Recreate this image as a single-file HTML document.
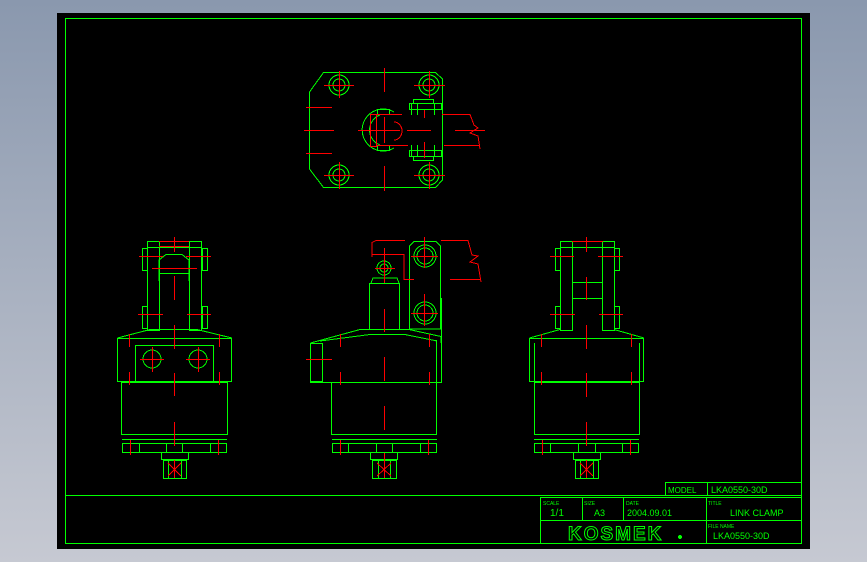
<!DOCTYPE html>
<html><head><style>
html,body{margin:0;padding:0;width:867px;height:562px;overflow:hidden;background:linear-gradient(#8a98ae,#c6c9d2);}
svg{position:absolute;left:0;top:0}
text{font-family:"Liberation Sans",sans-serif;fill:#00ff00}
</style></head><body>
<svg width="867" height="562" viewBox="0 0 867 562" shape-rendering="crispEdges">
<rect x="57" y="13" width="753" height="536" fill="#000"/>
<g fill="none" stroke="#00ff00" stroke-width="1">
<rect x="65.5" y="18.5" width="736" height="525"/>
<line x1="65" y1="495.5" x2="801" y2="495.5"/>
<polyline points="665.5,496 665.5,482.5 801,482.5"/>
<line x1="707.5" y1="482" x2="707.5" y2="496"/>
<rect x="540.5" y="497.5" width="261" height="46"/>
<line x1="540" y1="520.5" x2="801" y2="520.5"/>
<line x1="582.5" y1="497" x2="582.5" y2="520"/>
<line x1="623.5" y1="497" x2="623.5" y2="520"/>
<line x1="706.5" y1="497" x2="706.5" y2="543"/>

<polygon points="323.5,72.5 435.5,72.5 442.5,79 442.5,180 435.5,187.5 323.5,187.5 309.5,169 309.5,92"/>
<circle cx="339" cy="85" r="10"/><circle cx="339" cy="85" r="6"/>
<circle cx="429" cy="85" r="10"/><circle cx="429" cy="85" r="6"/>
<circle cx="339" cy="175" r="10"/><circle cx="339" cy="175" r="6"/>
<circle cx="429" cy="175" r="10"/><circle cx="429" cy="175" r="6"/>
<path d="M394 112 A21 21 0 1 0 394 148"/>
<path d="M380 115 A16 16 0 0 0 380 145"/>
<rect x="377.5" y="109.5" width="12" height="5"/><rect x="377.5" y="145.5" width="12" height="5"/>
<rect x="409.5" y="103.5" width="32" height="6"/><rect x="413.5" y="99.5" width="20" height="4"/>
<rect x="409.5" y="150.5" width="32" height="6"/><rect x="413.5" y="156.5" width="20" height="4"/>
<line x1="411.5" y1="103" x2="411.5" y2="115"/><line x1="417.5" y1="103" x2="417.5" y2="115"/><line x1="434.5" y1="103" x2="434.5" y2="115"/>
<line x1="411.5" y1="145" x2="411.5" y2="157"/><line x1="417.5" y1="145" x2="417.5" y2="157"/><line x1="434.5" y1="145" x2="434.5" y2="157"/>

<path d="M409.5 329 V246 L414 241.5 H436 L440.5 246 V329 Z"/>
<line x1="441.5" y1="298" x2="441.5" y2="382"/>
<circle cx="425" cy="256" r="11"/><circle cx="425" cy="256" r="8"/>
<circle cx="425" cy="313" r="11"/><circle cx="425" cy="313" r="8"/>
<circle cx="384" cy="268" r="7"/><circle cx="384" cy="268" r="4"/>
<rect x="369.5" y="283.5" width="30" height="46"/>
<path d="M371 283 L373 278 H397 L399 283"/>
<path d="M310.5 343 L360 329.5 H409 L441 336.5 V343"/>
<path d="M320 341 L370 334.5 H405 L437 341"/>
<rect x="310.5" y="343.5" width="12" height="38"/>
<line x1="310" y1="382.5" x2="442" y2="382.5"/>
<line x1="436.5" y1="340" x2="436.5" y2="434"/>
<line x1="331.5" y1="382" x2="331.5" y2="434"/>
<line x1="331" y1="434.5" x2="437" y2="434.5"/>
<rect x="332.5" y="443.5" width="104" height="9"/><line x1="332" y1="439.5" x2="437" y2="439.5"/>
<line x1="348.5" y1="443" x2="348.5" y2="452"/><line x1="376.5" y1="443" x2="376.5" y2="452"/><line x1="392.5" y1="443" x2="392.5" y2="452"/><line x1="420.5" y1="443" x2="420.5" y2="452"/>
<rect x="370.5" y="452.5" width="27" height="7"/>
<rect x="372.5" y="460.5" width="24" height="18"/><line x1="378.5" y1="460" x2="378.5" y2="478"/><line x1="390.5" y1="460" x2="390.5" y2="478"/>

<rect x="147.5" y="241.5" width="12" height="89"/><rect x="189.5" y="241.5" width="12" height="89"/>
<line x1="147" y1="247.5" x2="202" y2="247.5"/>
<path d="M159 281 V260 L166 254.5 H182 L189 260 V281"/>
<line x1="159" y1="273.5" x2="189" y2="273.5"/>
<rect x="142.5" y="248.5" width="5" height="22"/><rect x="202.5" y="248.5" width="5" height="22"/>
<rect x="142.5" y="306.5" width="5" height="22"/><rect x="202.5" y="306.5" width="5" height="22"/>
<path d="M117.5 338 L150 329.5 H197 L232 338"/>
<rect x="117.5" y="338.5" width="114" height="43"/>
<line x1="135.5" y1="345" x2="135.5" y2="382"/><line x1="213.5" y1="345" x2="213.5" y2="382"/>
<line x1="135" y1="345.5" x2="213" y2="345.5"/>
<circle cx="152" cy="359" r="9"/><circle cx="198" cy="359" r="9"/>
<rect x="121.5" y="382.5" width="106" height="52"/>
<rect x="122.5" y="443.5" width="104" height="9"/><line x1="122" y1="439.5" x2="227" y2="439.5"/>
<line x1="139.5" y1="443" x2="139.5" y2="452"/><line x1="166.5" y1="443" x2="166.5" y2="452"/><line x1="182.5" y1="443" x2="182.5" y2="452"/><line x1="210.5" y1="443" x2="210.5" y2="452"/>
<rect x="161.5" y="452.5" width="27" height="7"/>
<rect x="163.5" y="460.5" width="23" height="18"/><line x1="168.5" y1="460" x2="168.5" y2="478"/><line x1="181.5" y1="460" x2="181.5" y2="478"/>

<rect x="560.5" y="241.5" width="12" height="89"/><rect x="602.5" y="241.5" width="12" height="89"/>
<line x1="560" y1="247.5" x2="615" y2="247.5"/>
<line x1="572" y1="282.5" x2="603" y2="282.5"/><line x1="572" y1="298.5" x2="603" y2="298.5"/>
<rect x="555.5" y="248.5" width="5" height="22"/><rect x="614.5" y="248.5" width="5" height="22"/>
<rect x="555.5" y="306.5" width="5" height="22"/><rect x="614.5" y="306.5" width="5" height="22"/>
<path d="M529.5 338 L560 329.5 M614 329.5 L644 338"/>
<rect x="529.5" y="338.5" width="114" height="43"/>
<line x1="534.5" y1="343" x2="534.5" y2="382"/><line x1="639.5" y1="343" x2="639.5" y2="382"/>
<rect x="534.5" y="382.5" width="105" height="52"/>
<rect x="534.5" y="443.5" width="104" height="9"/><line x1="534" y1="439.5" x2="639" y2="439.5"/>
<line x1="550.5" y1="443" x2="550.5" y2="452"/><line x1="578.5" y1="443" x2="578.5" y2="452"/><line x1="595.5" y1="443" x2="595.5" y2="452"/><line x1="622.5" y1="443" x2="622.5" y2="452"/>
<rect x="573.5" y="452.5" width="27" height="7"/>
<rect x="575.5" y="460.5" width="23" height="18"/><line x1="580.5" y1="460" x2="580.5" y2="478"/><line x1="593.5" y1="460" x2="593.5" y2="478"/>
</g>

<g fill="none" stroke="#ff0000" stroke-width="1">
<line x1="304" y1="130.5" x2="334" y2="130.5"/><line x1="358" y1="130.5" x2="400" y2="130.5"/><line x1="407" y1="130.5" x2="431" y2="130.5"/><line x1="455" y1="130.5" x2="485" y2="130.5"/>
<line x1="306" y1="107.5" x2="332" y2="107.5"/><line x1="306" y1="153.5" x2="332" y2="153.5"/>
<line x1="384.5" y1="68" x2="384.5" y2="92"/><line x1="384.5" y1="117" x2="384.5" y2="143"/><line x1="384.5" y1="166" x2="384.5" y2="191"/>
<line x1="424.5" y1="110" x2="424.5" y2="118"/><line x1="424.5" y1="142" x2="424.5" y2="158"/>
<line x1="324" y1="85.5" x2="354" y2="85.5"/><line x1="339.5" y1="71" x2="339.5" y2="98"/>
<line x1="414" y1="85.5" x2="445" y2="85.5"/><line x1="429.5" y1="71" x2="429.5" y2="98"/>
<line x1="324" y1="175.5" x2="354" y2="175.5"/><line x1="339.5" y1="162" x2="339.5" y2="189"/>
<line x1="414" y1="175.5" x2="445" y2="175.5"/><line x1="429.5" y1="162" x2="429.5" y2="189"/>
<rect x="370.5" y="114.5" width="6" height="32"/>
<path d="M376 114.5 H402 M376 145.5 H408 M442 114.5 H470 L474 125 L478 128 L470 133 L478 136 L480 149 M444 145.5 H480"/>
<path d="M394 122 A8 9 0 0 1 394 140"/>
<line x1="384.5" y1="248" x2="384.5" y2="283"/><line x1="384.5" y1="309" x2="384.5" y2="332"/><line x1="384.5" y1="357" x2="384.5" y2="381"/><line x1="384.5" y1="406" x2="384.5" y2="430"/><line x1="384.5" y1="453" x2="384.5" y2="478"/>
<line x1="424.5" y1="237" x2="424.5" y2="268"/><line x1="411" y1="256.5" x2="438" y2="256.5"/>
<line x1="424.5" y1="294" x2="424.5" y2="326"/><line x1="411" y1="313.5" x2="438" y2="313.5"/>
<line x1="375" y1="268.5" x2="395" y2="268.5"/>
<path d="M372 257 V242.5 L376 240.5 H405 M372 254.5 H404 V279.5 H414 M441 240.5 H468 L472 255 L478 256 L470 262 L478 264 L481 282 M450 279.5 H480"/>
<line x1="306" y1="359.5" x2="332" y2="359.5"/>
<line x1="340.5" y1="334" x2="340.5" y2="347"/><line x1="340.5" y1="372" x2="340.5" y2="385"/><line x1="429.5" y1="334" x2="429.5" y2="347"/><line x1="429.5" y1="372" x2="429.5" y2="385"/>
<line x1="340.5" y1="440" x2="340.5" y2="455"/><line x1="428.5" y1="440" x2="428.5" y2="455"/>
<path d="M377 463 L391 476 M391 463 L377 476"/>
<line x1="174.5" y1="237" x2="174.5" y2="252"/><line x1="174.5" y1="276" x2="174.5" y2="300"/><line x1="174.5" y1="325" x2="174.5" y2="349"/><line x1="174.5" y1="373" x2="174.5" y2="396"/><line x1="174.5" y1="422" x2="174.5" y2="446"/><line x1="174.5" y1="460" x2="174.5" y2="478"/>
<line x1="159" y1="241.5" x2="189" y2="241.5"/><line x1="159" y1="246.5" x2="189" y2="246.5"/>
<line x1="139" y1="256.5" x2="163" y2="256.5"/><line x1="186" y1="256.5" x2="211" y2="256.5"/><line x1="152" y1="268.5" x2="197" y2="268.5"/>
<line x1="138" y1="314.5" x2="163" y2="314.5"/><line x1="187" y1="314.5" x2="211" y2="314.5"/>
<line x1="140" y1="359.5" x2="164" y2="359.5"/><line x1="152.5" y1="347" x2="152.5" y2="372"/>
<line x1="186" y1="359.5" x2="210" y2="359.5"/><line x1="198.5" y1="347" x2="198.5" y2="372"/>
<line x1="129.5" y1="334" x2="129.5" y2="347"/><line x1="129.5" y1="372" x2="129.5" y2="385"/><line x1="219.5" y1="334" x2="219.5" y2="347"/><line x1="219.5" y1="372" x2="219.5" y2="385"/>
<line x1="130.5" y1="440" x2="130.5" y2="455"/><line x1="218.5" y1="440" x2="218.5" y2="455"/>
<path d="M168 463 L181 476 M181 463 L168 476"/>
<line x1="586.5" y1="237" x2="586.5" y2="252"/><line x1="586.5" y1="277" x2="586.5" y2="300"/><line x1="586.5" y1="325" x2="586.5" y2="349"/><line x1="586.5" y1="373" x2="586.5" y2="397"/><line x1="586.5" y1="422" x2="586.5" y2="446"/><line x1="586.5" y1="460" x2="586.5" y2="478"/>
<line x1="572" y1="241.5" x2="603" y2="241.5"/>
<line x1="550" y1="256.5" x2="574" y2="256.5"/><line x1="598" y1="256.5" x2="623" y2="256.5"/>
<line x1="550" y1="314.5" x2="575" y2="314.5"/><line x1="599" y1="314.5" x2="623" y2="314.5"/>
<line x1="541.5" y1="334" x2="541.5" y2="347"/><line x1="541.5" y1="372" x2="541.5" y2="385"/><line x1="631.5" y1="334" x2="631.5" y2="347"/><line x1="631.5" y1="372" x2="631.5" y2="385"/>
<line x1="542.5" y1="440" x2="542.5" y2="455"/><line x1="630.5" y1="440" x2="630.5" y2="455"/>
<path d="M580 463 L593 476 M593 463 L580 476"/>
</g>

<text x="668" y="493" font-size="8">MODEL</text>
<text x="711" y="493" font-size="9">LKA0550-30D</text>
<text x="543" y="505" font-size="5">SCALE</text>
<text x="584" y="505" font-size="5">SIZE</text>
<text x="626" y="505" font-size="5">DATE</text>
<text x="708" y="505" font-size="5">TITLE</text>
<text x="550" y="516" font-size="10">1/1</text>
<text x="594" y="516" font-size="9">A3</text>
<text x="627" y="516" font-size="9">2004.09.01</text>
<text x="730" y="516" font-size="9">LINK CLAMP</text>
<text x="708" y="528" font-size="5">FILE NAME</text>
<text x="713" y="539" font-size="9">LKA0550-30D</text>
<text x="568" y="540" font-size="19" letter-spacing="2" style="fill:none;stroke:#00ff00;stroke-width:1;font-weight:900">KOSMEK</text>
<circle cx="680" cy="537" r="2" fill="#00ff00"/>
</svg>
</body></html>
